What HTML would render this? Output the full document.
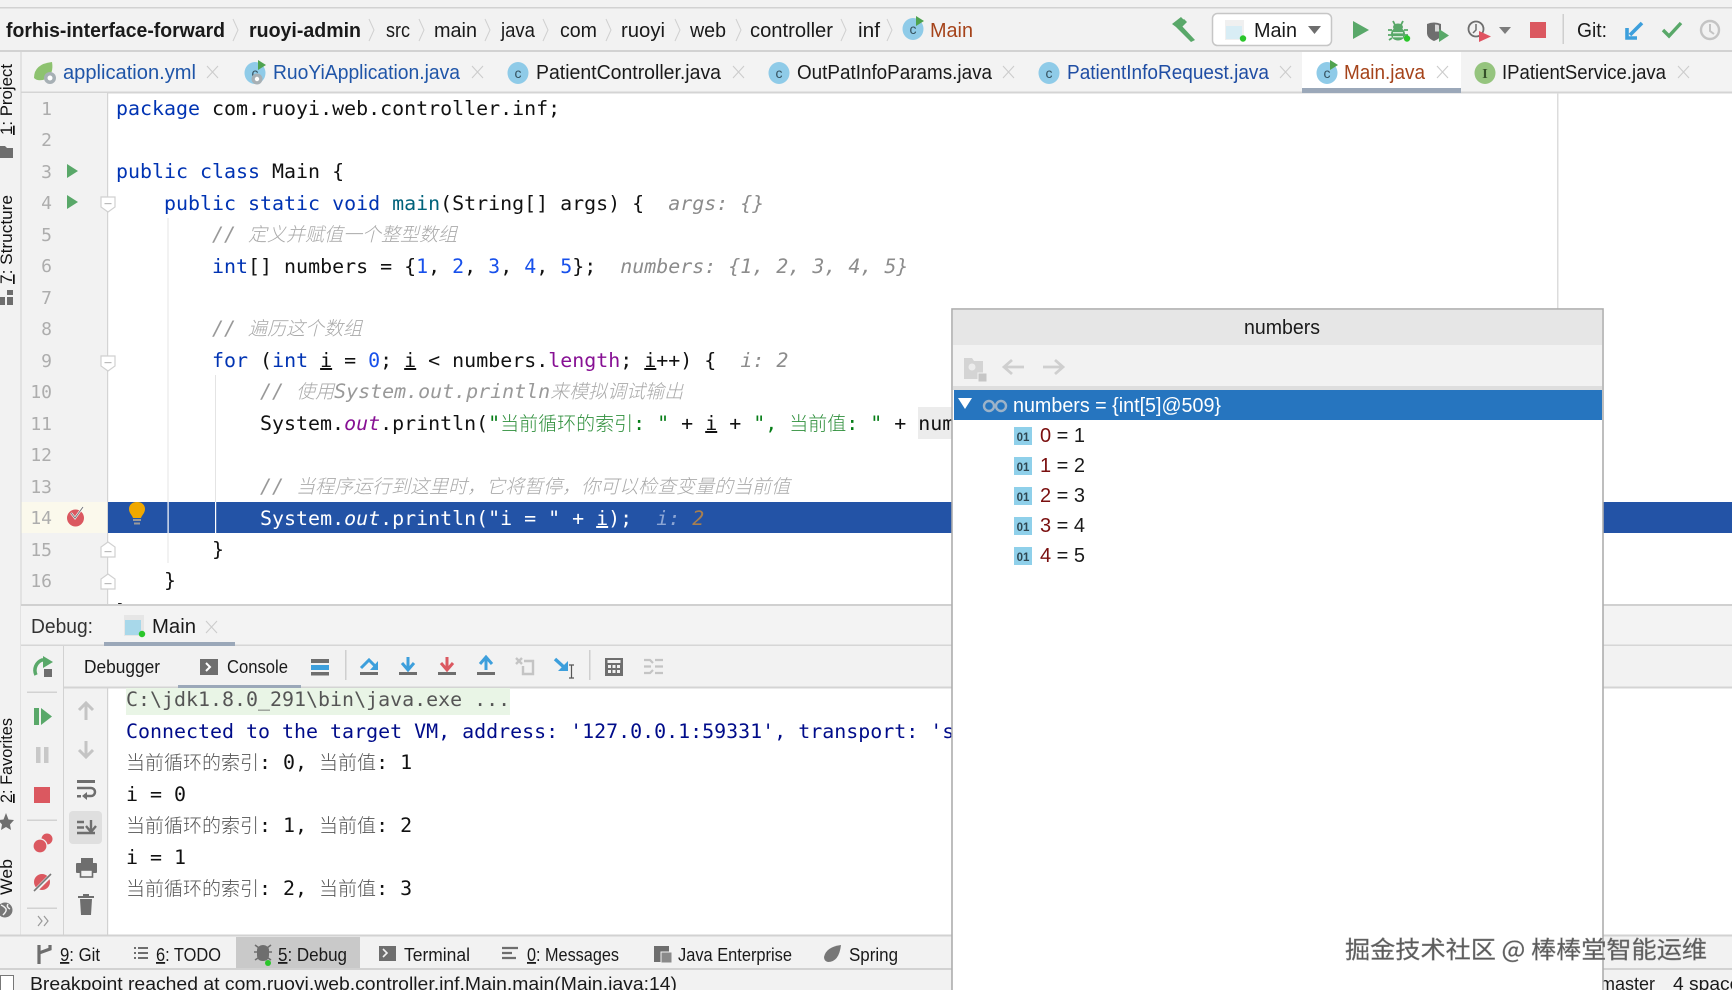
<!DOCTYPE html>
<html><head><meta charset="utf-8"><title>IDE</title>
<style>
html,body{margin:0;padding:0;background:#fff;width:1732px;height:990px;overflow:hidden}
svg{display:block;position:absolute;left:0;top:0}
text{white-space:pre}
.u{font-family:"Liberation Sans","Noto Sans CJK SC",sans-serif;font-size:20px;fill:#1a1a1a}
.c{font-family:"DejaVu Sans Mono","Liberation Mono","Noto Sans CJK SC",monospace;font-size:19.95px;fill:#111}
.k{fill:#0033b3}.n{fill:#1750eb}.m{fill:#00627a}.s{fill:#067d17}.f{fill:#871094}.o{font-style:italic;fill:#871094}
.h{font-style:italic;fill:#8c8c8c}.cm{font-style:italic;fill:#999}
.z{font-family:"Noto Sans CJK SC",sans-serif;font-size:19px;font-weight:300}
.cz{fill:#aaa}.sz{fill:#2f8f3c}.tz{fill:#555}
.ln{font-family:"DejaVu Sans Mono",monospace;font-size:18px;fill:#adadad;text-anchor:end}
.sb{font-family:"Liberation Sans",sans-serif;font-size:17px;fill:#111}
</style></head><body>
<svg width="1732" height="990" viewBox="0 0 1732 990" xmlns="http://www.w3.org/2000/svg">
<defs>
<g id="ci"><ellipse cx="11" cy="11" rx="10.5" ry="11" fill="#8fcbe8"/><text x="11" y="16" text-anchor="middle" font-family="Liberation Sans" font-size="14" fill="#35515e">c</text></g>
<g id="ciR"><use href="#ci"/><path d="M14-2 L22 3 L14 8Z" fill="#4fa34f"/></g>
<path id="x" d="M0 0L11 12M11 0L0 12" stroke="#cccccc" stroke-width="1.1" fill="none"/>
<path id="ch" d="M0 0L5 11L0 22" stroke="#d0d0d0" stroke-width="1" fill="none"/>
<path id="fd" d="M0 0H14V10L7 15L0 10Z" fill="#fff" stroke="#d0d0d0" stroke-width="1.2"/>
<path id="fu" d="M0 15H14V5L7 0L0 5Z" fill="#fff" stroke="#d0d0d0" stroke-width="1.2"/>
<g id="oi"><rect width="18" height="18" fill="#8fd0ea"/><text x="9" y="14" text-anchor="middle" font-family="Liberation Sans" font-weight="bold" font-size="11.5" fill="#2f4752">01</text></g>
</defs>

<!-- backgrounds -->
<rect width="1732" height="990" fill="#fff"/>
<rect width="1732" height="52" fill="#f2f2f2"/>
<rect y="7" width="1732" height="1.5" fill="#d2d2d2"/>
<rect y="50" width="1732" height="2" fill="#d2d2d2"/>
<rect y="52" width="1732" height="40" fill="#f3f3f3"/>
<rect y="91.5" width="1732" height="2" fill="#d4d4d4"/>
<rect x="0" y="52" width="21" height="938" fill="#f2f2f2"/>
<rect x="20.5" y="52" width="1" height="885" fill="#d2d2d2"/>
<rect x="21.5" y="93" width="85.5" height="512" fill="#f2f2f2"/>
<rect x="107" y="93" width="1.2" height="512" fill="#d4d4d4"/>
<rect x="1557" y="93" width="1.5" height="512" fill="#dcdcdc"/>

<!-- current line highlight & guides -->
<rect x="21.5" y="502" width="85.5" height="31" fill="#fbf9ec"/>
<rect x="108" y="502" width="1624" height="31" fill="#2353a6"/>
<rect x="918" y="407" width="40" height="32" fill="#ececec"/>
<rect x="167.5" y="218" width="1" height="345" fill="#e4e4e4"/>
<rect x="215" y="375" width="1" height="158" fill="#e4e4e4"/>
<rect x="167.5" y="502" width="1.2" height="31" fill="#fff"/>
<rect x="215" y="502" width="1.2" height="31" fill="#fff"/>

<!-- nav bar breadcrumbs -->
<text class="u" x="6" y="37" font-weight="bold" textLength="219" lengthAdjust="spacingAndGlyphs">forhis-interface-forward</text>
<text class="u" x="249" y="37" font-weight="bold" textLength="112" lengthAdjust="spacingAndGlyphs">ruoyi-admin</text>
<text class="u" x="386" y="37" textLength="24" lengthAdjust="spacingAndGlyphs">src</text>
<text class="u" x="434" y="37" textLength="43" lengthAdjust="spacingAndGlyphs">main</text>
<text class="u" x="501" y="37" textLength="34" lengthAdjust="spacingAndGlyphs">java</text>
<text class="u" x="560" y="37" textLength="37" lengthAdjust="spacingAndGlyphs">com</text>
<text class="u" x="621" y="37" textLength="44" lengthAdjust="spacingAndGlyphs">ruoyi</text>
<text class="u" x="690" y="37" textLength="36" lengthAdjust="spacingAndGlyphs">web</text>
<text class="u" x="750" y="37" textLength="83" lengthAdjust="spacingAndGlyphs">controller</text>
<text class="u" x="858" y="37" textLength="22" lengthAdjust="spacingAndGlyphs">inf</text>
<use href="#ch" x="233" y="19"/><use href="#ch" x="369" y="19"/><use href="#ch" x="419" y="19"/><use href="#ch" x="485" y="19"/><use href="#ch" x="543" y="19"/><use href="#ch" x="606" y="19"/><use href="#ch" x="675" y="19"/><use href="#ch" x="736" y="19"/><use href="#ch" x="841" y="19"/><use href="#ch" x="887" y="19"/>
<use href="#ciR" x="902" y="18"/>
<text class="u" x="930" y="37" style="fill:#a5431a" textLength="43" lengthAdjust="spacingAndGlyphs">Main</text>

<!-- toolbar right -->
<path d="M1176 27L1184 19L1187 22L1179 30Z M1181 25L1195 40L1191 42L1177 28Z M1172 24L1181 17L1184 20L1176 27Z" fill="#59a869"/>
<rect x="1212.5" y="13.5" width="119" height="32" rx="5" fill="#fff" stroke="#c6c6c6" stroke-width="1.5"/>
<rect x="1225" y="20" width="19" height="20" fill="#f0f0f0"/><rect x="1226" y="26" width="16" height="13" fill="#d8edf5"/>
<circle cx="1243" cy="38.5" r="3.2" fill="#2bc62b"/>
<text class="u" x="1254" y="37" textLength="43" lengthAdjust="spacingAndGlyphs">Main</text>
<path d="M1308 26H1321L1314.5 34Z" fill="#6e6e6e"/>
<path d="M1353 21L1369 30L1353 39Z" fill="#59a869"/>
<!-- debug bug -->
<path d="M1393 21l2 4M1403 21l-2 4" stroke="#59a869" stroke-width="1.8" fill="none"/>
<ellipse cx="1398" cy="27" rx="5" ry="3.500" fill="#59a869"/>
<ellipse cx="1398" cy="34" rx="7" ry="6.500" fill="#59a869"/>
<path d="M1388 30h4M1404 30h4M1388 35h4M1404 35h4M1389 40l3-2M1407 40l-3-2" stroke="#59a869" stroke-width="1.800"/>
<rect x="1393" y="32" width="10" height="1.400" fill="#d6ead9"/><rect x="1393" y="36" width="10" height="1.400" fill="#d6ead9"/>
<circle cx="1407" cy="38.5" r="3.2" fill="#2bc62b"/>
<!-- coverage -->
<path d="M1427 24q7-3 14 0v12q-2 3-7 5q-7-3-7-8Z" fill="#6e6e6e"/><path d="M1435 24.500q3 0 4 1v6h-4Z" fill="#d8d8d8"/>
<path d="M1439 29L1449 35.5L1439 42Z" fill="#59a869"/>
<circle cx="1476" cy="29" r="7.5" fill="none" stroke="#6e6e6e" stroke-width="1.8"/><path d="M1476 24v6l-3 3" stroke="#6e6e6e" stroke-width="1.5" fill="none"/>
<path d="M1479 31L1491 36.5L1479 42Z" fill="#e05361"/>
<path d="M1499 27H1511L1505 34Z" fill="#7c7c7c"/>
<rect x="1530" y="22" width="16" height="16" fill="#db5860"/>
<rect x="1562.5" y="14" width="1.5" height="30" fill="#cfcfcf"/>
<text class="u" x="1577" y="37" textLength="30" lengthAdjust="spacingAndGlyphs">Git:</text>
<path d="M1642 23L1630 35M1627 28V38H1637" stroke="#3d9fdc" stroke-width="3.6" fill="none"/>
<path d="M1663 30L1669 36L1681 23" stroke="#59a869" stroke-width="3.4" fill="none"/>
<circle cx="1710" cy="30" r="9" fill="none" stroke="#c4c4c4" stroke-width="2.4"/><path d="M1710 24v7l4 3" stroke="#c4c4c4" stroke-width="2" fill="none"/>

<!-- tabs -->
<rect x="1302" y="52" width="159" height="40" fill="#fff"/>
<rect x="1302" y="88" width="159" height="5" fill="#9ba8b9"/>
<g>
<path d="M34 78q0-14 18-16q2 12-6 17q-8 3-12-1Z" fill="#8dc26f"/><circle cx="50" cy="78" r="6" fill="#a7b0b5"/><circle cx="50" cy="78" r="2.5" fill="#fff"/>
<text class="u" x="63" y="79" style="fill:#1f55a8" textLength="133" lengthAdjust="spacingAndGlyphs">application.yml</text>
<use href="#x" x="207" y="66"/>
<use href="#ciR" x="244" y="62"/><circle cx="257" cy="79" r="5.5" fill="#a7b0b5"/><circle cx="257" cy="79" r="2.2" fill="#fff"/>
<text class="u" x="273" y="79" style="fill:#1f55a8" textLength="187" lengthAdjust="spacingAndGlyphs">RuoYiApplication.java</text>
<use href="#x" x="472" y="66"/>
<use href="#ci" x="507" y="62"/>
<text class="u" x="536" y="79" textLength="185" lengthAdjust="spacingAndGlyphs">PatientController.java</text>
<use href="#x" x="733" y="66"/>
<use href="#ci" x="768" y="62"/>
<text class="u" x="797" y="79" textLength="195" lengthAdjust="spacingAndGlyphs">OutPatInfoParams.java</text>
<use href="#x" x="1003" y="66"/>
<use href="#ci" x="1038" y="62"/>
<text class="u" x="1067" y="79" style="fill:#1f4da3" textLength="202" lengthAdjust="spacingAndGlyphs">PatientInfoRequest.java</text>
<use href="#x" x="1280" y="66"/>
<use href="#ciR" x="1316" y="62"/>
<text class="u" x="1344" y="79" style="fill:#a5431a" textLength="81" lengthAdjust="spacingAndGlyphs">Main.java</text>
<use href="#x" x="1437" y="66"/>
<ellipse cx="1485" cy="73" rx="10.5" ry="11" fill="#95c47e"/><text x="1485" y="78" text-anchor="middle" font-family="Liberation Serif" font-weight="bold" font-size="14" fill="#35512a">I</text>
<text class="u" x="1502" y="79" textLength="164" lengthAdjust="spacingAndGlyphs">IPatientService.java</text>
<use href="#x" x="1678" y="66"/>
</g>

<!-- gutter -->
<g class="ln">
<text class="ln" x="52" y="115">1</text><text class="ln" x="52" y="146">2</text><text class="ln" x="52" y="178">3</text><text class="ln" x="52" y="209">4</text><text class="ln" x="52" y="241">5</text><text class="ln" x="52" y="272">6</text><text class="ln" x="52" y="304">7</text><text class="ln" x="52" y="335">8</text><text class="ln" x="52" y="367">9</text><text class="ln" x="52" y="398">10</text><text class="ln" x="52" y="430">11</text><text class="ln" x="52" y="461">12</text><text class="ln" x="52" y="493">13</text><text class="ln" x="52" y="524">14</text><text class="ln" x="52" y="556">15</text><text class="ln" x="52" y="587">16</text>
</g>
<path d="M67 164L78 171L67 178Z M67 195L78 202L67 209Z" fill="#59a869"/>
<use href="#fd" x="101" y="197"/><use href="#fd" x="101" y="356"/><use href="#fu" x="101" y="542"/><use href="#fu" x="101" y="574"/>
<rect x="104.5" y="203" width="7" height="1.2" fill="#bbb"/><rect x="104.5" y="362" width="7" height="1.2" fill="#bbb"/><rect x="104.5" y="551" width="7" height="1.2" fill="#bbb"/><rect x="104.5" y="583" width="7" height="1.2" fill="#bbb"/>
<circle cx="75.5" cy="518" r="8.5" fill="#db5860"/><path d="M71 513L75 518L83 507" stroke="#fff" stroke-width="2.2" fill="none"/><path d="M71 513L75 518L83 507" stroke="#777" stroke-width="1" fill="none"/>
<path d="M137 502c5 0 8 3 8 7 0 4-3 6-4 9h-8c-1-3-4-5-4-9 0-4 3-7 8-7Z" fill="#f0a800"/><rect x="133" y="519" width="8" height="2" fill="#9a9a9a"/><rect x="134" y="522.5" width="6" height="2" fill="#9a9a9a"/>

<!-- code -->
<text class="c" x="116" y="115"><tspan class="k">package</tspan> com.ruoyi.web.controller.inf;</text>
<text class="c" x="116" y="178"><tspan class="k">public class</tspan> Main {</text>
<text class="c" x="116" y="210">    <tspan class="k">public static void</tspan> <tspan class="m">main</tspan>(String[] args) {  <tspan class="h">args: {}</tspan></text>
<text class="c" x="116" y="241">        <tspan class="cm">// </tspan><tspan class="cm z cz">定义并赋值一个整型数组</tspan></text>
<text class="c" x="116" y="273">        <tspan class="k">int</tspan>[] numbers = {<tspan class="n">1</tspan>, <tspan class="n">2</tspan>, <tspan class="n">3</tspan>, <tspan class="n">4</tspan>, <tspan class="n">5</tspan>};  <tspan class="h">numbers: {1, 2, 3, 4, 5}</tspan></text>
<text class="c" x="116" y="335">        <tspan class="cm">// </tspan><tspan class="cm z cz">遍历这个数组</tspan></text>
<text class="c" x="116" y="367">        <tspan class="k">for</tspan> (<tspan class="k">int</tspan> <tspan text-decoration="underline">i</tspan> = <tspan class="n">0</tspan>; <tspan text-decoration="underline">i</tspan> &lt; numbers.<tspan class="f">length</tspan>; <tspan text-decoration="underline">i</tspan>++) {  <tspan class="h">i: 2</tspan></text>
<text class="c" x="116" y="398">            <tspan class="cm">// </tspan><tspan class="cm z cz">使用</tspan><tspan class="cm">System.out.println</tspan><tspan class="cm z cz">来模拟调试输出</tspan></text>
<text class="c" x="116" y="430">            System.<tspan class="o">out</tspan>.println(<tspan class="s">"</tspan><tspan class="s z sz">当前循环的索引</tspan><tspan class="s">: "</tspan> + <tspan text-decoration="underline">i</tspan> + <tspan class="s">", </tspan><tspan class="s z sz">当前值</tspan><tspan class="s">: "</tspan> + num</text>
<text class="c" x="116" y="493">            <tspan class="cm">// </tspan><tspan class="cm z cz">当程序运行到这里时，它将暂停，你可以检查变量的当前值</tspan></text>
<text class="c" x="116" y="525" style="fill:#fff">            <tspan fill="#fff">System.</tspan><tspan fill="#fff" font-style="italic">out</tspan><tspan fill="#fff">.println("i = " + </tspan><tspan fill="#fff" text-decoration="underline">i</tspan><tspan fill="#fff">);  </tspan><tspan fill="#8da6d4" font-style="italic">i: </tspan><tspan fill="#a87f4f" font-style="italic">2</tspan></text>
<text class="c" x="116" y="556">        }</text>
<text class="c" x="116" y="587">    }</text>
<text class="c" x="116" y="618">}</text>

<!-- debug panel -->
<rect x="21" y="605" width="1711" height="332" fill="#fff"/>
<rect x="21" y="604" width="1711" height="2" fill="#d0d0d0"/>
<rect x="21" y="606" width="1711" height="39" fill="#f3f3f3"/>
<rect x="21" y="644.5" width="1711" height="1.5" fill="#d6d6d6"/>
<rect x="21" y="646" width="86" height="289" fill="#f2f2f2"/>
<rect x="63" y="646" width="1" height="289" fill="#d2d2d2"/>
<rect x="64" y="646" width="1668" height="41" fill="#f2f2f2"/>
<rect x="107" y="687" width="1.2" height="248" fill="#d2d2d2"/>
<rect x="64" y="686.5" width="1668" height="2" fill="#d4d4d4"/>
<rect x="104" y="642" width="131" height="4" fill="#9ba8b9"/>
<rect x="178" y="685" width="123" height="3.5" fill="#9ba8b9"/>
<text class="u" x="31" y="633" style="fill:#333" textLength="62" lengthAdjust="spacingAndGlyphs">Debug:</text>
<rect x="124" y="615" width="20" height="21" fill="#e6e6e6"/><rect x="125" y="620" width="16" height="15" fill="#a8d8ea"/><circle cx="142" cy="634" r="3.2" fill="#2bc62b"/>
<text class="u" x="152" y="633" textLength="44" lengthAdjust="spacingAndGlyphs">Main</text>
<use href="#x" x="206" y="621"/>
<text class="u" x="84" y="673" style="font-size:18px" textLength="76" lengthAdjust="spacingAndGlyphs">Debugger</text>
<rect x="200" y="659" width="18" height="16" fill="#6e6e6e"/><path d="M206 663L210 667L206 671" stroke="#fff" stroke-width="2" fill="none"/>
<text class="u" x="227" y="673" style="font-size:18px" textLength="61" lengthAdjust="spacingAndGlyphs">Console</text>
<rect x="311" y="659" width="18" height="4" fill="#6e6e6e"/><rect x="311" y="665" width="18" height="5" fill="#3d9fdc"/><rect x="311" y="672" width="18" height="3.5" fill="#6e6e6e"/>
<rect x="345" y="650" width="1.5" height="30" fill="#cfcfcf"/>
<!-- step icons -->
<path d="M361 668L369 660L377 668" stroke="#3d9fdc" stroke-width="3" fill="none"/><path d="M378 661V670H370Z" fill="#3d9fdc"/><rect x="360" y="672" width="18" height="3" fill="#6e6e6e"/>
<path d="M408 657V668M402 663L408 670L414 663" stroke="#3d9fdc" stroke-width="3" fill="none"/><rect x="399" y="672" width="18" height="3" fill="#6e6e6e"/>
<path d="M447 657V668M441 663L447 670L453 663" stroke="#db5860" stroke-width="3" fill="none"/><rect x="438" y="672" width="18" height="3" fill="#6e6e6e"/>
<path d="M486 670V659M480 664L486 657L492 664" stroke="#3d9fdc" stroke-width="3" fill="none"/><rect x="477" y="672" width="18" height="3" fill="#6e6e6e"/>
<path d="M516 658L522 664M522 658L516 664" stroke="#c4c4c4" stroke-width="2.4"/><path d="M524 661H533V674H523V666" stroke="#c4c4c4" stroke-width="2.4" fill="none"/>
<path d="M555 659L566 669" stroke="#3d9fdc" stroke-width="3.4"/><path d="M568 661V671H558Z" fill="#3d9fdc"/><path d="M569 665h5M569 678h5M571.5 665v13" stroke="#555" stroke-width="1.2"/>
<rect x="589" y="650" width="1.5" height="30" fill="#cfcfcf"/>
<rect x="605" y="658" width="18" height="18" fill="#6e6e6e"/><rect x="607.5" y="660" width="13" height="3" fill="#f2f2f2"/>
<path d="M608 665h3v3h-3zM612.5 665h3v3h-3zM617 665h3v3h-3zM608 670h3v3h-3zM612.5 670h3v3h-3zM617 670h3v3h-3z" fill="#f2f2f2"/>
<path d="M644 660h6l3 3M644 673h6l3-3M644 666.5h7M655 660h8M655 673h8M655 666.5h8" stroke="#c4c4c4" stroke-width="2.2" fill="none"/>

<!-- debug strip 1 -->
<path d="M36 675a11 11 0 0 1 6-15h4" stroke="#59a869" stroke-width="3.5" fill="none"/><path d="M43 656L53 662L43 668Z" fill="#59a869"/><rect x="44" y="669" width="8" height="8" fill="#6e6e6e"/>
<rect x="27" y="691.5" width="30" height="1.5" fill="#d2d2d2"/>
<rect x="34" y="708" width="5" height="17" fill="#59a869"/><path d="M41 708L52 716.5L41 725Z" fill="#59a869"/>
<rect x="36" y="747" width="4.5" height="16" fill="#c8c8c8"/><rect x="44" y="747" width="4.5" height="16" fill="#c8c8c8"/>
<rect x="34" y="787" width="16" height="16" fill="#db5860"/>
<rect x="27" y="819.5" width="30" height="1.5" fill="#d2d2d2"/>
<circle cx="47" cy="839" r="5.5" fill="#db5860"/><circle cx="40" cy="846" r="7" fill="#db5860" stroke="#f2f2f2" stroke-width="1.2"/>
<circle cx="42" cy="882" r="8" fill="#db5860"/><path d="M34 892L51 875" stroke="#f2f2f2" stroke-width="4"/><path d="M34 891L51 874" stroke="#777" stroke-width="1.6"/>
<rect x="27" y="907.5" width="30" height="1.5" fill="#d2d2d2"/>
<path d="M38 916l4 5-4 5M44 916l4 5-4 5" stroke="#999" stroke-width="1.2" fill="none"/>

<!-- debug strip 2 -->
<path d="M86 720V703M79 710L86 703L93 710" stroke="#c4c4c4" stroke-width="3" fill="none"/>
<path d="M86 741V757M79 750L86 757L93 750" stroke="#c4c4c4" stroke-width="3" fill="none"/>
<rect x="77" y="780" width="18" height="3" fill="#6e6e6e"/><path d="M77 788H91a3.5 3.5 0 0 1 0 8H84" stroke="#6e6e6e" stroke-width="2.5" fill="none"/><path d="M87 792L82 796L87 800Z" fill="#6e6e6e"/><rect x="77" y="795" width="4" height="2.5" fill="#6e6e6e"/>
<rect x="69" y="811" width="33" height="33" rx="4" fill="#dfdfdf"/>
<path d="M77 822h7M77 827.5h7M77 833h18" stroke="#6e6e6e" stroke-width="2.4"/><path d="M91 820V831M86 826L91 832L96 826" stroke="#6e6e6e" stroke-width="2.4" fill="none"/>
<rect x="81" y="858" width="12" height="5" fill="#6e6e6e"/><rect x="76" y="863" width="21" height="10" rx="1" fill="#6e6e6e"/><rect x="80.5" y="870" width="12" height="7" fill="#f2f2f2" stroke="#6e6e6e" stroke-width="1.6"/>
<path d="M80 899h12l-1 16h-10Z" fill="#6e6e6e"/><rect x="78" y="896" width="16" height="2" fill="#6e6e6e"/><rect x="83" y="894" width="6" height="2" fill="#6e6e6e"/>

<!-- console -->
<rect x="126" y="688" width="384" height="27" fill="#e9f5e6"/>
<text class="c" x="126" y="706" style="fill:#555">C:\jdk1.8.0_291\bin\java.exe ...</text>
<text class="c" x="126" y="738" style="fill:#000c8a">Connected to the target VM, address: '127.0.0.1:59331', transport: 's</text>
<text class="c" x="126" y="769"><tspan class="z tz">当前循环的索引</tspan>: 0, <tspan class="z tz">当前值</tspan>: 1</text>
<text class="c" x="126" y="801">i = 0</text>
<text class="c" x="126" y="832"><tspan class="z tz">当前循环的索引</tspan>: 1, <tspan class="z tz">当前值</tspan>: 2</text>
<text class="c" x="126" y="864">i = 1</text>
<text class="c" x="126" y="895"><tspan class="z tz">当前循环的索引</tspan>: 2, <tspan class="z tz">当前值</tspan>: 3</text>

<!-- bottom tool bar -->
<rect y="934.5" width="1732" height="2" fill="#d2d2d2"/>
<rect y="936.5" width="1732" height="31.5" fill="#f2f2f2"/>
<rect y="968" width="1732" height="2" fill="#d2d2d2"/>
<rect y="970" width="1732" height="20" fill="#f2f2f2"/>
<rect x="236" y="937" width="124" height="31" fill="#c9c9c9"/>
<path d="M39 945V964" stroke="#6e6e6e" stroke-width="3.2"/><path d="M39 953L50 949V945" stroke="#6e6e6e" stroke-width="3.2" fill="none"/>
<text class="u" x="60" y="961" style="font-size:18px" textLength="40" lengthAdjust="spacingAndGlyphs"><tspan text-decoration="underline">9</tspan>: Git</text>
<path d="M134 948h2M134 953h2M134 958h2M138 948h10M138 953h10M138 958h10" stroke="#6e6e6e" stroke-width="2"/>
<text class="u" x="156" y="961" style="font-size:18px" textLength="65" lengthAdjust="spacingAndGlyphs"><tspan text-decoration="underline">6</tspan>: TODO</text>
<path d="M257 950a6 5 0 0 1 12 0v5c0 4-2 6-6 6s-6-2-6-6Z" fill="#6e6e6e"/><path d="M254 952h4M268 952h4M255 945l4 3M271 945l-4 3M255 960l3-2M271 960l-3-2" stroke="#6e6e6e" stroke-width="1.6"/><circle cx="268" cy="963" r="3" fill="#2bc62b"/>
<text class="u" x="278" y="961" style="font-size:18px" textLength="69" lengthAdjust="spacingAndGlyphs"><tspan text-decoration="underline">5</tspan>: Debug</text>
<rect x="379" y="946" width="17" height="15" fill="#6e6e6e"/><path d="M383 949L387 953L383 957" stroke="#f2f2f2" stroke-width="1.6" fill="none"/>
<text class="u" x="404" y="961" style="font-size:18px" textLength="66" lengthAdjust="spacingAndGlyphs">Terminal</text>
<path d="M502 948h16M502 953h10M502 958h14" stroke="#6e6e6e" stroke-width="2.2"/>
<text class="u" x="527" y="961" style="font-size:18px" textLength="92" lengthAdjust="spacingAndGlyphs"><tspan text-decoration="underline">0</tspan>: Messages</text>
<rect x="654" y="946" width="15" height="16" fill="#6e6e6e"/><rect x="661" y="952" width="11" height="11" fill="#8a8a8a" stroke="#f2f2f2"/>
<text class="u" x="678" y="961" style="font-size:18px" textLength="114" lengthAdjust="spacingAndGlyphs">Java Enterprise</text>
<path d="M841 945q-15 2-17 12q0 4 4 5q11 0 13-17Z" fill="#777"/>
<text class="u" x="849" y="961" style="font-size:18px" textLength="49" lengthAdjust="spacingAndGlyphs">Spring</text>

<!-- status -->
<rect x="0.5" y="975.5" width="13" height="20" fill="#fff" stroke="#777"/>
<text class="u" x="30" y="990" style="font-size:18px" textLength="647" lengthAdjust="spacingAndGlyphs">Breakpoint reached at com.ruoyi.web.controller.inf.Main.main(Main.java:14)</text>
<text class="u" x="1600" y="990" style="font-size:18px">master</text>
<text class="u" x="1673" y="990" style="font-size:18px" textLength="77" lengthAdjust="spacingAndGlyphs">4 spaces</text>

<!-- popup -->
<rect x="952" y="309" width="651" height="690" fill="#fff" stroke="#adadad" stroke-width="1.6"/>
<rect x="953" y="310" width="649" height="35" fill="#e6e6e6"/>
<rect x="953" y="345" width="649" height="41" fill="#f2f2f2"/>
<rect x="953" y="386" width="649" height="4" fill="#dedede"/>
<text class="u" x="1244" y="334" textLength="76" lengthAdjust="spacingAndGlyphs">numbers</text>
<path d="M964 358h8l2 3h9v18h-19Z" fill="#d4d4d4"/><circle cx="972" cy="367" r="3.5" fill="#ececec"/><rect x="978" y="373" width="9" height="9" fill="#c6c6c6" stroke="#f2f2f2" stroke-width="1"/>
<path d="M1024 367H1005M1012 360L1004 367L1012 374" stroke="#cfcfcf" stroke-width="2.8" fill="none"/>
<path d="M1043 367H1062M1055 360L1063 367L1055 374" stroke="#cfcfcf" stroke-width="2.8" fill="none"/>
<rect x="954" y="390" width="648" height="30" fill="#2675bf"/>
<path d="M958 398H972L965 409Z" fill="#fff"/>
<circle cx="989" cy="406" r="5" fill="none" stroke="#9db3c8" stroke-width="2.4"/><circle cx="1001" cy="406" r="5" fill="none" stroke="#9db3c8" stroke-width="2.4"/>
<text class="u" x="1013" y="412" style="fill:#fff" textLength="208" lengthAdjust="spacingAndGlyphs">numbers = {int[5]@509}</text>
<use href="#oi" x="1014" y="427"/><use href="#oi" x="1014" y="457"/><use href="#oi" x="1014" y="487"/><use href="#oi" x="1014" y="517"/><use href="#oi" x="1014" y="547"/>
<text class="u" x="1040" y="442"><tspan style="fill:#7a0f0f">0</tspan> = 1</text>
<text class="u" x="1040" y="472"><tspan style="fill:#7a0f0f">1</tspan> = 2</text>
<text class="u" x="1040" y="502"><tspan style="fill:#7a0f0f">2</tspan> = 3</text>
<text class="u" x="1040" y="532"><tspan style="fill:#7a0f0f">3</tspan> = 4</text>
<text class="u" x="1040" y="562"><tspan style="fill:#7a0f0f">4</tspan> = 5</text>

<!-- watermark -->
<text x="1345" y="958" font-family="'Noto Sans CJK SC','Liberation Sans',sans-serif" font-size="24" textLength="362" fill="#5a5a5a" stroke="#8a8a8a" stroke-width="0.4" lengthAdjust="spacingAndGlyphs">掘金技术社区 @ 棒棒堂智能运维</text>

<!-- sidebar labels -->
<rect x="0" y="52" width="20" height="260" fill="#f2f2f2"/>
<text class="sb" transform="translate(12,135) rotate(-90)" textLength="71" lengthAdjust="spacingAndGlyphs"><tspan text-decoration="underline">1</tspan>: Project</text>
<path d="M0 146h5l2 2h6v10H0Z" fill="#6e6e6e"/>
<text class="sb" transform="translate(12,284) rotate(-90)" textLength="89" lengthAdjust="spacingAndGlyphs"><tspan text-decoration="underline">7</tspan>: Structure</text>
<path d="M0 297h5v8H0zM7 297h6v8H7zM7 290h6v5H7z" fill="#6e6e6e"/>
<text class="sb" transform="translate(12,803) rotate(-90)" textLength="85" lengthAdjust="spacingAndGlyphs"><tspan text-decoration="underline">2</tspan>: Favorites</text>
<path d="M6 813L8.5 819.5L14 820L10 824.5L11 830L6 827L1 830L2 824.5L-2 820L3.5 819.5Z" fill="#6e6e6e"/>
<text class="sb" transform="translate(12,895) rotate(-90)" textLength="36" lengthAdjust="spacingAndGlyphs">Web</text>
<circle cx="5" cy="910" r="7.5" fill="#777"/><path d="M1 905q4 2 5 4t-3 6M8 904q-2 3 2 5" stroke="#f2f2f2" stroke-width="1.5" fill="none"/>
</svg>
</body></html>
